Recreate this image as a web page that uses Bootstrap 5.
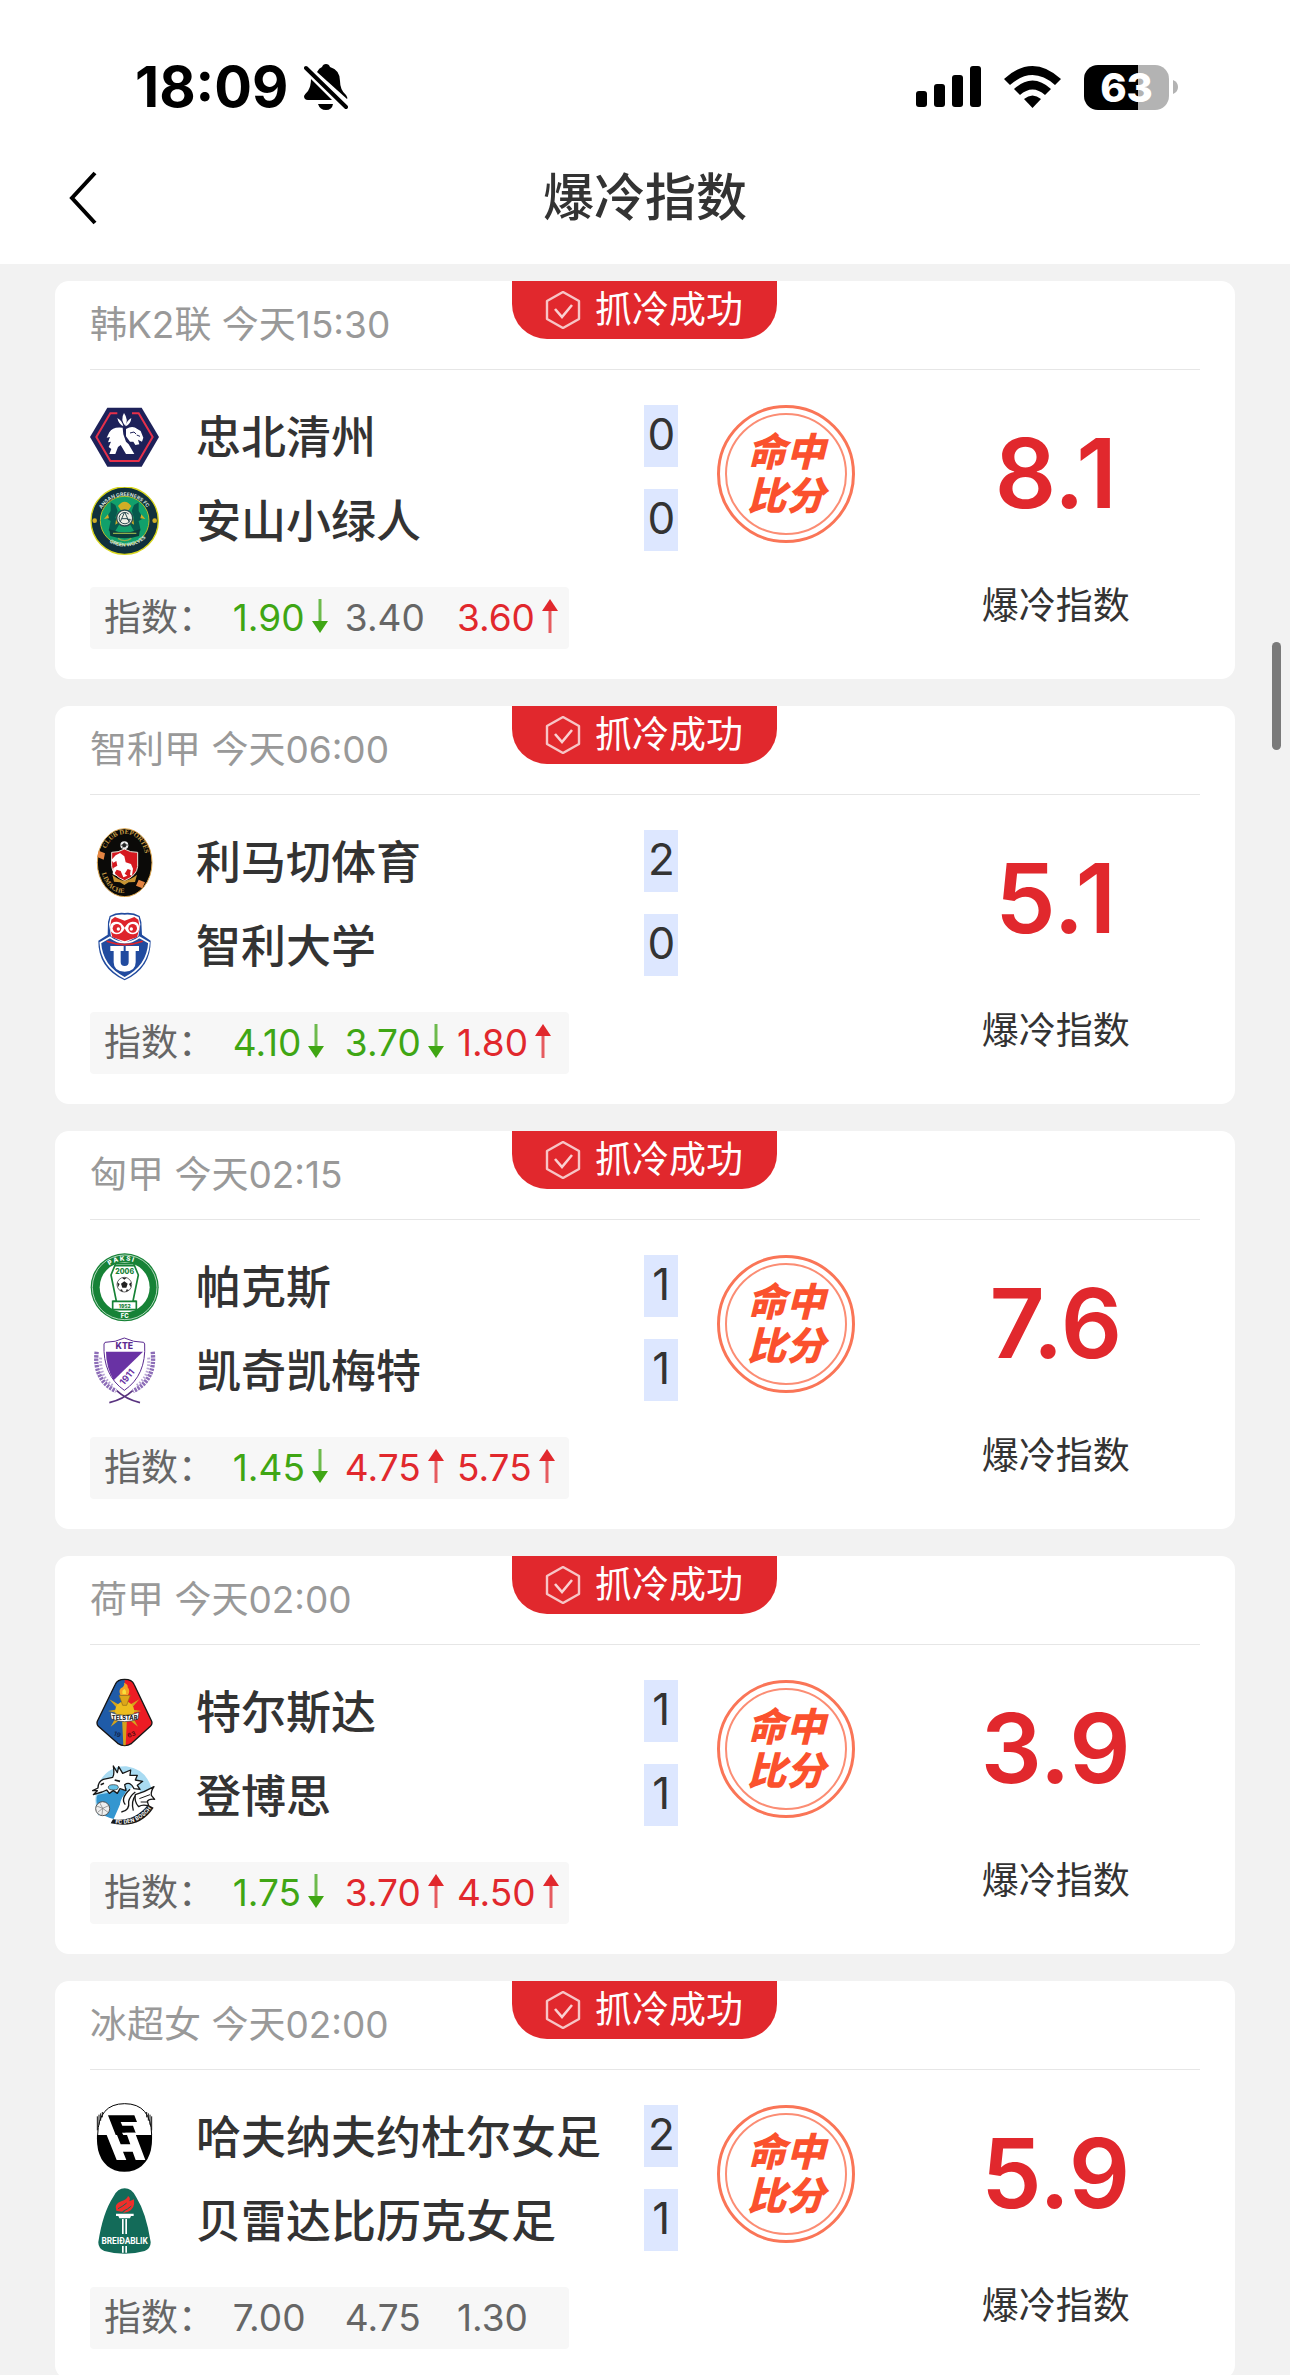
<!DOCTYPE html>
<html lang="zh-CN">
<head>
<meta charset="utf-8">
<meta name="viewport" content="width=device-width, initial-scale=1">
<title>爆冷指数</title>
<link href="https://cdn.jsdelivr.net/npm/bootstrap@5.3.0/dist/css/bootstrap.min.css" rel="stylesheet">
<style>
  body { background: #f2f2f2; color: #333; font-family: Inter, "Noto Sans CJK SC", sans-serif; }
  .app-head { flex: none; height: 264px; }
  .status-row { height: 116px; padding: 58px 112px 0 135px; color: #000; }
  .clock { font-size: 56px; line-height: 58px; font-weight: 700; }
  .status-gap { margin-left: 23px; }
  .battery { width: 85px; height: 45px; border-radius: 14px; background: linear-gradient(90deg, #000 63%, #b3b3b3 63%); color: #fff; font-size: 40px; line-height: 45px; font-weight: 800; text-align: center; }
  .title-row { height: 148px; padding: 16px 60px 0; }
  .title-row h1 { font-size: 51px; line-height: 60px; font-weight: 500; }
  .back-btn { width: 47px; height: 70px; left: 59px; }
  .feed { padding: 17px 55px 0; scrollbar-width: none; }
  .feed::-webkit-scrollbar { display: none; }
  .match-card { border-radius: 14px; padding: 0 35px 30px; margin-bottom: 27px; }
  .match-head { height: 89px; border-bottom: 1px solid #e6e6e6; font-size: 37px; line-height: 88px; font-weight: 400; color: #999; }
  .hit-flag { top: 0; left: 50%; width: 265px; height: 58px; margin-left: -133px; padding-left: 33px; gap: 14px; border-radius: 0 0 35px 35px; background: #e1282d; color: #fff; font-size: 37px; line-height: 56px; font-weight: 400; }
  .match-main { padding-top: 33px; }
  .match-teams { width: 53%; gap: 15px; }
  .team-line { height: 69px; }
  .crest { width: 69px; height: 69px; margin-right: 37px; flex: none; }
  .team-name { font-size: 45px; line-height: 68px; font-weight: 500; }
  .goals { width: 34px; height: 62px; margin-bottom: 4px; background: #dde7ff; font-size: 44px; line-height: 58px; text-align: center; }
  .stamp { width: 138px; height: 138px; margin: 2px 0 0 39px; padding-top: 22px; border: 3px solid #fa7557; border-radius: 50%; color: #fb512d; font-size: 39px; line-height: 44px; font-weight: 900; font-style: italic; text-align: center; }
  .stamp::after { content: ""; position: absolute; inset: 5px; border: 2px solid #fb8d74; border-radius: 50%; }
  .upset { width: 26%; padding-top: 20px; }
  .upset-num { font-size: 96px; line-height: 100px; font-weight: 600; color: #e1282d; }
  .upset-label { margin-top: 58px; font-size: 37px; line-height: 50px; }
  .odds { width: 479px; height: 62px; margin-top: 16px; padding-left: 14px; border-radius: 4px; background: #f7f7f7; color: #666; font-size: 37px; line-height: 62px; }
  .odds dt { width: 131px; font-weight: 400; }
  .odds dd { width: 114px; margin: 0; gap: 7px; }
  .odds svg { width: 16px; height: 34px; margin-bottom: 4px; flex: none; }
  .fall { color: #3fa614; }
  .rise { color: #e1282d; }
  .scroll-thumb { top: 642px; right: 9px; width: 9px; height: 108px; border-radius: 5px; background: #7a7a7a; }
</style>
<script src="https://cdn.jsdelivr.net/npm/bootstrap@5.3.0/dist/js/bootstrap.bundle.min.js"></script>
</head>
<body>
<svg class="d-none" aria-hidden="true">
  <symbol id="hex-check" viewBox="0 0 36 38"><path d="M18 1 34 10V28L18 37 2 28V10Z" fill="none" stroke="#f7c5c6" stroke-width="2.4" stroke-linejoin="round"/><path d="M10 18l7 8 10-12" fill="none" stroke="#f9d0d1" stroke-width="2.6"/></symbol>
  <symbol id="arrow-down" viewBox="0 0 16 34"><path d="M8 0V24" stroke="currentColor" stroke-width="3" opacity=".75"/><path d="M0 22H16L8 34Z" fill="currentColor"/></symbol>
  <symbol id="arrow-up" viewBox="0 0 16 34"><path d="M8 34V10" stroke="currentColor" stroke-width="3" opacity=".75"/><path d="M0 12H16L8 0Z" fill="currentColor"/></symbol>
</svg>

<div class="vh-100 d-flex flex-column overflow-hidden position-relative">
  <header class="app-head bg-white">
    <div class="status-row d-flex align-items-center">
      <span class="clock">18:09</span>
      <svg class="ms-3" width="44" height="46" viewBox="0 0 44 46" aria-label="静音"><path d="M13 8Q15 4 18 3Q19 0 22 0T26 3Q36 6 36 17Q36 26 42 31Q44 34 43 35ZM7 15L28 36H4Q0 36 0 32Q1 30 4 27Q7 22 7 15ZM14 40H29Q28 46 22 46T14 40Z"/><path d="M2 4 42 43" stroke="#fff" stroke-width="8"/><path d="M2 4 42 43" stroke="#000" stroke-width="4" stroke-linecap="round"/></svg>
      <svg class="ms-auto" width="65" height="42" viewBox="0 0 65 42" aria-label="信号"><rect y="25" width="11" height="16" rx="3"/><rect x="18" y="18" width="11" height="23" rx="3"/><rect x="36" y="9" width="11" height="32" rx="3"/><rect x="54" width="11" height="41" rx="3"/></svg>
      <svg class="status-gap" width="57" height="42" viewBox="0 0 57 42" aria-label="无线网络"><path d="M0 13Q28.500-13 57 13L51 19Q28.500-1 6 19Z"/><path d="M10 23Q28.500 6 47 23L41 29Q28.500 18 16 29Z"/><path d="M20 33Q28.500 26 37 33L28.500 42Z"/></svg>
      <span class="battery status-gap">63</span>
      <svg class="ms-1" width="5" height="14" viewBox="0 0 5 14"><path d="M0 0Q5 2 5 7T0 14Z" fill="#b3b3b3"/></svg>
    </div>
    <nav class="title-row d-flex align-items-center justify-content-center position-relative">
      <button type="button" class="back-btn btn p-0 border-0 position-absolute" aria-label="返回"><svg width="30" height="54" viewBox="0 0 30 54"><path d="M27 2 4 27 27 52" fill="none" stroke="#000" stroke-width="4"/></svg></button>
      <h1 class="m-0">爆冷指数</h1>
    </nav>
  </header>

  <main class="feed flex-grow-1 overflow-auto">

    <article class="match-card bg-white position-relative">
      <div class="match-head">韩K2联 今天15:30</div>
      <div class="hit-flag position-absolute d-flex align-items-center"><svg width="36" height="38"><use href="#hex-check"/></svg>抓冷成功</div>
      <div class="match-main d-flex align-items-start">
        <div class="match-teams d-flex flex-column">
          <div class="team-line d-flex align-items-center">
            <svg class="crest" viewBox="30 34 207 207"><path d="M82 48H185L237 136 185 225H82L30 136Z" fill="#1d2159"/><path d="M112 65H91L49 136 91 208H176L218 136 176 65H156" fill="none" stroke="#e6304a" stroke-width="6"/><path d="M132 64Q146 84 136 103Q120 84 132 64ZM112 79Q126 86 130 104Q116 98 112 79ZM154 79Q140 86 137 104Q152 98 154 79Z" fill="#fff"/><path d="M128 108Q98 104 88 122L80 138 90 136 84 152 93 150 86 166 94 172 88 187H106L114 166 122 160 138 187H163L146 158 138 150 130 128ZM138 112Q158 100 172 112L182 118 190 138 186 150 174 144 178 158 166 160 160 150 150 150 138 134Z" fill="#fff"/><path d="M150 124l12-3 6 6M170 130l10 4" stroke="#1d2159" stroke-width="3" fill="none"/></svg>
            <span class="team-name">忠北清州</span><span class="goals ms-auto">0</span>
          </div>
          <div class="team-line d-flex align-items-center">
            <svg class="crest" viewBox="30 289 207 207"><defs><path id="ag-top" d="M53 397A81 81 0 0 1 215 397"/><path id="ag-bot" d="M46 392A89 89 0 0 0 222 392"/></defs><circle cx="134" cy="390" r="101" fill="#10303c" stroke="#d8d61d" stroke-width="4"/><circle cx="134" cy="390" r="73" fill="#11a06b" stroke="#b6be2a" stroke-width="3"/><g font-family="Inter,sans-serif" font-size="15" font-weight="700" fill="#d7e3dc"><text><textPath href="#ag-top" startOffset="44">ANSAN GREENERS FC</textPath></text><text><textPath href="#ag-bot" startOffset="78">GREEN WOLVES</textPath></text></g><path d="M92 335l14 8 7 18-7 20 12 20-18 30-14-12 6-28-14-8 14-22ZM176 335l-14 8-7 18 7 20-12 20 18 30 14-12-6-28 14-8-14-22Z" fill="#07594d"/><path d="M114 346q20-26 40 0l-8 12h-24ZM72 385l12-14 3 12ZM196 385l-12-14-3 12ZM110 372l8 22-12 8ZM158 372l-8 22 12 8Z" fill="#d1ae25"/><path d="M88 416q46 18 92 0l-3 20q-43 14-86 0Z" fill="#0d3c3b"/><path d="M99 428h70M114 443q20 14 40 0" stroke="#8fae4c" stroke-width="4" fill="none"/><circle cx="134" cy="382" r="24" fill="#eef1e6" stroke="#294b50" stroke-width="4"/><path d="M120 395l14-31 14 31M126 384h16M146 370a17 17 0 1 0 5 16h-10" fill="none" stroke="#294b50" stroke-width="3"/><circle cx="44" cy="390" r="7" fill="#d1ae25"/><circle cx="224" cy="390" r="7" fill="#d1ae25"/></svg>
            <span class="team-name">安山小绿人</span><span class="goals ms-auto">0</span>
          </div>
          <dl class="odds d-flex mb-0"><dt>指数：</dt><dd class="fall d-flex align-items-center">1.90<svg><use href="#arrow-down"/></svg></dd><dd>3.40</dd><dd class="rise d-flex align-items-center">3.60<svg><use href="#arrow-up"/></svg></dd></dl>
        </div>
        <div class="stamp position-relative">命中<br>比分</div>
        <div class="upset ms-auto text-center"><div class="upset-num">8.1</div><div class="upset-label">爆冷指数</div></div>
      </div>
    </article>

    <article class="match-card bg-white position-relative">
      <div class="match-head">智利甲 今天06:00</div>
      <div class="hit-flag position-absolute d-flex align-items-center"><svg width="36" height="38"><use href="#hex-check"/></svg>抓冷成功</div>
      <div class="match-main d-flex align-items-start">
        <div class="match-teams d-flex flex-column">
          <div class="team-line d-flex align-items-center">
            <svg class="crest" viewBox="30 36 207 207"><defs><path id="li-top" d="M77 104C92 42 176 30 195 112Q201 140 190 170"/><path id="li-bot" d="M64 166C78 228 128 248 172 216"/></defs><ellipse cx="134" cy="140" rx="82" ry="102" fill="#0b0a08" stroke="#dda64e" stroke-width="3"/><g font-family="Liberation Serif,serif" font-size="20" font-weight="700" fill="#c99d45"><text><textPath href="#li-top" startOffset="6">CLUB DEPORTES</textPath></text><text><textPath href="#li-bot" startOffset="6">LIMACHE</textPath></text></g><path d="M56 104l19 8-4 19-19-8ZM176 191l19 8-8 18-19-8Z" fill="#e58543"/><path d="M95 109q20 1 38-10 18 11 40 10v42q-2 27-39 43-37-16-39-43Z" fill="#d51920" stroke="#f1e8dd" stroke-width="3"/><circle cx="133" cy="88" r="12" fill="#eee"/><path d="M133 81l6 5-3 7h-7l-2-7ZM122 88h5M139 87h6M128 94l-3 5" stroke="#222" fill="#222" stroke-width="2"/><path d="M107 118l13-7 13 10 4 18 16 5 6 14-3 21-6-2 2-15-9-3-9 14 8 6-12 5-8-19-12-4-6 10 4 9-10-6 2-18 12-7-3-14-9 5-6-8Z" fill="#fff"/><path d="M97 176q18 16 36 18 20-3 38-18l-6 22-19 1-13 8-13-8-18-2Z" fill="#c79433"/></svg>
            <span class="team-name">利马切体育</span><span class="goals ms-auto">2</span>
          </div>
          <div class="team-line d-flex align-items-center">
            <svg class="crest" viewBox="30 289 207 207"><path d="M89 301q20-12 45-9 25-3 45 9l5 18 2 38 26 18q1 82-78 119-80-37-79-119l28-18 1-38Z" fill="#214b9f"/><path d="M92 304q20-9 42-7 22-2 42 7l5 22-6 36-41 20-41-20-6-36Z" fill="#fff"/><path d="M94 312l11-8 29 11 29-11 12 8 4 25-8 28-37 12-37-12-7-28Z" fill="#de242c"/><path d="M90 334q3-17 21-16 13 0 23 18 10-18 23-18 18-1 21 16 0 20-18 22-19 0-26-18-7 18-26 18-18-2-18-22Z" fill="#fff"/><circle cx="111" cy="338" r="13" fill="#de242c"/><circle cx="158" cy="338" r="13" fill="#de242c"/><circle cx="115" cy="340" r="5" fill="#fff"/><circle cx="154" cy="340" r="5" fill="#fff"/><path d="M61 381l29-16q44 32 88 0l29 16q-4 71-73 106-69-35-73-106Z" fill="#214b9f" stroke="#fff" stroke-width="5"/><path d="M80 377q54 20 108 0" stroke="#de242c" stroke-width="5" fill="none"/><path d="M91 391h40v15h-9v33q0 12 12 12t12-12v-33h-9v-15h40v15h-10v34q0 28-33 28t-33-28v-34H91Z" fill="#fff"/></svg>
            <span class="team-name">智利大学</span><span class="goals ms-auto">0</span>
          </div>
          <dl class="odds d-flex mb-0"><dt>指数：</dt><dd class="fall d-flex align-items-center">4.10<svg><use href="#arrow-down"/></svg></dd><dd class="fall d-flex align-items-center">3.70<svg><use href="#arrow-down"/></svg></dd><dd class="rise d-flex align-items-center">1.80<svg><use href="#arrow-up"/></svg></dd></dl>
        </div>
        <div class="upset ms-auto text-center"><div class="upset-num">5.1</div><div class="upset-label">爆冷指数</div></div>
      </div>
    </article>

    <article class="match-card bg-white position-relative">
      <div class="match-head">匈甲 今天02:15</div>
      <div class="hit-flag position-absolute d-flex align-items-center"><svg width="36" height="38"><use href="#hex-check"/></svg>抓冷成功</div>
      <div class="match-main d-flex align-items-start">
        <div class="match-teams d-flex flex-column">
          <div class="team-line d-flex align-items-center">
            <svg class="crest" viewBox="30 38 207 207"><defs><path id="pa-top" d="M54 141A80 80 0 0 1 214 141"/></defs><circle cx="134" cy="141" r="102" fill="#168236"/><circle cx="134" cy="141" r="97" fill="none" stroke="#fff" stroke-width="2"/><circle cx="134" cy="141" r="75" fill="#fff"/><text font-family="Inter,sans-serif" font-size="19" font-weight="800" fill="#fff"><textPath href="#pa-top" startOffset="76">P A K S I</textPath></text><text x="134" y="234" text-anchor="middle" font-family="Inter,sans-serif" font-size="18" font-weight="800" fill="#fff">FC</text><path d="M107 70h54l14 34-16 78 10 1v25H98v-25l11-1-16-78Z" fill="#fff" stroke="#168236" stroke-width="5"/><path d="M98 183h71M104 76h60" stroke="#168236" stroke-width="5"/><text x="134" y="101" text-anchor="middle" font-family="Inter,sans-serif" font-size="21" font-weight="800" fill="#168236">2006</text><text x="134" y="202" text-anchor="middle" font-family="Inter,sans-serif" font-size="15" font-weight="800" fill="#168236">1952</text><circle cx="133" cy="133" r="22" fill="#fff" stroke="#222" stroke-width="2"/><path d="M133 123l10 7-4 12h-12l-4-12ZM126 112h14l-7 6ZM112 126l7 5-5 10ZM154 126l-7 5 5 10ZM119 149l7-2 3 8ZM147 149l-7-2-3 8Z" fill="#222"/></svg>
            <span class="team-name">帕克斯</span><span class="goals ms-auto">1</span>
          </div>
          <div class="team-line d-flex align-items-center">
            <svg class="crest" viewBox="30 290 207 207"><g fill="none" stroke="#8c6cb7" stroke-width="13" stroke-dasharray="7 3"><path d="M50 334Q40 420 108 452M218 334Q228 420 159 452"/></g><g fill="none" stroke="#b9a6d4" stroke-width="9" stroke-dasharray="5 5"><path d="M62 352Q58 408 98 436M206 352Q210 408 170 436"/></g><path d="M88 487q42-10 70-36M180 487q-42-10-70-36" stroke="#59337f" stroke-width="5" fill="none"/><path d="M75 306q32 0 58-13 27 13 58 13l3 5q5 94-61 139-65-45-61-139Z" fill="#fff" stroke="#5b2c91" stroke-width="3"/><path d="M78 334H189L101 420Q78 380 78 334Z" fill="#6932a4"/><text x="133" y="327" text-anchor="middle" font-family="Inter,sans-serif" font-size="26" font-weight="800" fill="#5b2c91">KTE</text><text x="131" y="436" transform="rotate(-50 131 436)" font-family="Inter,sans-serif" font-size="27" font-weight="700" fill="#6932a4">1911</text></svg>
            <span class="team-name">凯奇凯梅特</span><span class="goals ms-auto">1</span>
          </div>
          <dl class="odds d-flex mb-0"><dt>指数：</dt><dd class="fall d-flex align-items-center">1.45<svg><use href="#arrow-down"/></svg></dd><dd class="rise d-flex align-items-center">4.75<svg><use href="#arrow-up"/></svg></dd><dd class="rise d-flex align-items-center">5.75<svg><use href="#arrow-up"/></svg></dd></dl>
        </div>
        <div class="stamp position-relative">命中<br>比分</div>
        <div class="upset ms-auto text-center"><div class="upset-num">7.6</div><div class="upset-label">爆冷指数</div></div>
      </div>
    </article>

    <article class="match-card bg-white position-relative">
      <div class="match-head">荷甲 今天02:00</div>
      <div class="hit-flag position-absolute d-flex align-items-center"><svg width="36" height="38"><use href="#hex-check"/></svg>抓冷成功</div>
      <div class="match-main d-flex align-items-start">
        <div class="match-teams d-flex flex-column">
          <div class="team-line d-flex align-items-center">
            <svg class="crest" viewBox="30 40 207 207"><path d="M134 44q-22 0-28 15L52 170q-3 8 3 15l58 51q21 14 42 0l56-51q7-7 4-15L162 59q-6-15-28-15Z" fill="#ed1c24"/><path d="M134 44q-22 0-28 15L52 170q-3 8 3 15l58 51q10 8 21 8Z" fill="#1f5ba8"/><path d="M134 44q-22 0-28 15L52 170q-3 8 3 15l58 51q21 14 42 0l56-51q7-7 4-15L162 59q-6-15-28-15Z" fill="none" stroke="#161616" stroke-width="4"/><path d="M124 124L88 104 114 134 84 139 114 146 92 186 126 160 130 242H137L141 160 174 186 152 146 184 139 152 134 178 104 143 124Z" fill="#d4a31d"/><circle cx="134" cy="139" r="29" fill="#edbd1e"/><path d="M117 92h34l-5 13-6 17h-12l-6-17Z" fill="#dda719" stroke="#8f6a17" stroke-width="2"/><path d="M121 91q-8-18 8-24 6-8 3-13 13 5 11 14 9 11 1 23Z" fill="#f5a525"/><path d="M128 88q-4-12 6-15 7 7 4 15Z" fill="#f8e03c"/><path d="M91 143q43 18 86 0l-3 20q-40 16-80 0Z" fill="#fff" stroke="#333" stroke-width="2"/><text x="134" y="167" text-anchor="middle" font-family="Inter,sans-serif" font-size="17" font-weight="800" fill="#222">TELSTAR</text><text x="100" y="212" transform="rotate(20 100 212)" font-family="Inter,sans-serif" font-size="19" font-weight="700" fill="#13264d">19</text><text x="145" y="220" transform="rotate(-20 145 220)" font-family="Inter,sans-serif" font-size="19" font-weight="700" fill="#5b0d10">63</text></svg>
            <span class="team-name">特尔斯达</span><span class="goals ms-auto">1</span>
          </div>
          <div class="team-line d-flex align-items-center">
            <svg class="crest" viewBox="30 294 207 207"><defs><path id="db-arc" d="M104 472Q172 482 214 424"/></defs><path d="M54 362Q82 305 139 307 200 316 215 375L150 400 54 455Q38 405 54 362Z" fill="#a9dbf2"/><path d="M53 392L100 384 142 372 101 465Q44 454 50 399Z" fill="#3496d0"/><path d="M122 440Q112 412 140 384L160 366Q190 372 176 402 168 420 186 428L160 456 110 464Z" fill="#fff"/><path d="M136 422Q120 404 150 376M124 444Q150 440 146 412 Q150 396 166 384M168 392Q152 412 160 440" stroke="#171717" stroke-width="4" fill="none"/><path d="M166 392Q194 384 222 368 212 382 214 394L224 406Q206 404 202 412L206 426Q188 420 176 428Q162 414 166 392Z" fill="#fff" stroke="#171717" stroke-width="4" stroke-linejoin="round"/><path d="M178 404l32-12M182 414l22 0" stroke="#171717" stroke-width="3"/><path d="M54 372Q54 352 70 346L98 340Q104 332 100 306L112 326 116 308 128 328 152 318 150 334 172 334 166 348 188 352 172 364 180 376 162 374Q150 350 134 362L138 380 120 374 112 388 100 380 88 388 80 378 66 384 40 392 52 380 38 380Z" fill="#fff" stroke="#171717" stroke-width="4" stroke-linejoin="round"/><ellipse cx="100" cy="370" rx="15" ry="8" fill="#67c3e8" stroke="#222" stroke-width="2"/><path d="M104 348l16 4M62 362l10-4" stroke="#171717" stroke-width="5"/><path d="M99 466Q163 474 204 422L221 431Q178 497 92 478Z" fill="#171717"/><circle cx="68" cy="434" r="21" fill="#eee" stroke="#555" stroke-width="3"/><path d="M50 426l18 7 20-9M68 433l-2 21M59 416l9 17M54 444l14-11 16 12" stroke="#777" stroke-width="2" fill="none"/><text dy="6" font-family="Roboto,sans-serif" font-size="17" font-weight="700" fill="#fff"><textPath href="#db-arc" startOffset="2">FC DEN BOSCH</textPath></text></svg>
            <span class="team-name">登博思</span><span class="goals ms-auto">1</span>
          </div>
          <dl class="odds d-flex mb-0"><dt>指数：</dt><dd class="fall d-flex align-items-center">1.75<svg><use href="#arrow-down"/></svg></dd><dd class="rise d-flex align-items-center">3.70<svg><use href="#arrow-up"/></svg></dd><dd class="rise d-flex align-items-center">4.50<svg><use href="#arrow-up"/></svg></dd></dl>
        </div>
        <div class="stamp position-relative">命中<br>比分</div>
        <div class="upset ms-auto text-center"><div class="upset-num">3.9</div><div class="upset-label">爆冷指数</div></div>
      </div>
    </article>

    <article class="match-card bg-white position-relative">
      <div class="match-head">冰超女 今天02:00</div>
      <div class="hit-flag position-absolute d-flex align-items-center"><svg width="36" height="38"><use href="#hex-check"/></svg>抓冷成功</div>
      <div class="match-main d-flex align-items-start">
        <div class="match-teams d-flex flex-column">
          <div class="team-line d-flex align-items-center">
            <svg class="crest" viewBox="30 42 207 207"><path d="M51 138V82Q82 42 134 42T216 82v56Q220 220 163 244q-30 9-59 0Q47 220 51 138Z" fill="#fff"/><path d="M51 138H216Q220 220 163 244q-30 9-59 0Q47 220 51 138Z" fill="#000"/><path d="M53 138Q55 44 134 44t81 94" fill="none" stroke="#000" stroke-width="3"/><path d="M52 82v42M57 77v30M62 73v22M67 69v16M215 82v42M210 77v30M205 73v22M200 69v16" stroke="#111" stroke-width="3"/><path d="M84 79h79l8 20h-49l5 11h32l8 21h-31l4 9H108Z" fill="#000"/><path d="M80 138h31l11 28h29l-10-28h-11l-4-7h39l31 82h-29l-9-25h-29l10 25h-29Z" fill="#fff"/></svg>
            <span class="team-name">哈夫纳夫约杜尔女足</span><span class="goals ms-auto">2</span>
          </div>
          <div class="team-line d-flex align-items-center">
            <svg class="crest" viewBox="30 297 207 207"><path d="M134 301q21 0 34 25 31 49 44 136 1 19-18 27-60 17-121 0-19-8-18-27 13-87 45-136 13-25 34-25Z" fill="#136b59"/><path d="M109 368q-8-20 15-28 18-6 20-16 9 5 4 16l14-6q4 29-18 37l-15 4 8-8-12 4Z" fill="#ee2f2b"/><path d="M114 362q12-5 26-17M130 369q12-4 24-15" stroke="#136b59" stroke-width="3" fill="none"/><path d="M108 377h53v7h-8l-3 7h-32l-3-7h-7ZM126 393h5v45h-5ZM136 393h5v45h-5ZM126 474h5v20h-5ZM136 474h5v20h-5Z" fill="#fff"/><text x="134" y="468" text-anchor="middle" font-family="Roboto,sans-serif" font-size="25" font-weight="700" fill="#fff">BREIÐABLIK</text></svg>
            <span class="team-name">贝雷达比历克女足</span><span class="goals ms-auto">1</span>
          </div>
          <dl class="odds d-flex mb-0"><dt>指数：</dt><dd>7.00</dd><dd>4.75</dd><dd>1.30</dd></dl>
        </div>
        <div class="stamp position-relative">命中<br>比分</div>
        <div class="upset ms-auto text-center"><div class="upset-num">5.9</div><div class="upset-label">爆冷指数</div></div>
      </div>
    </article>

  </main>
  <div class="scroll-thumb position-absolute"></div>
</div>
</body>
</html>
